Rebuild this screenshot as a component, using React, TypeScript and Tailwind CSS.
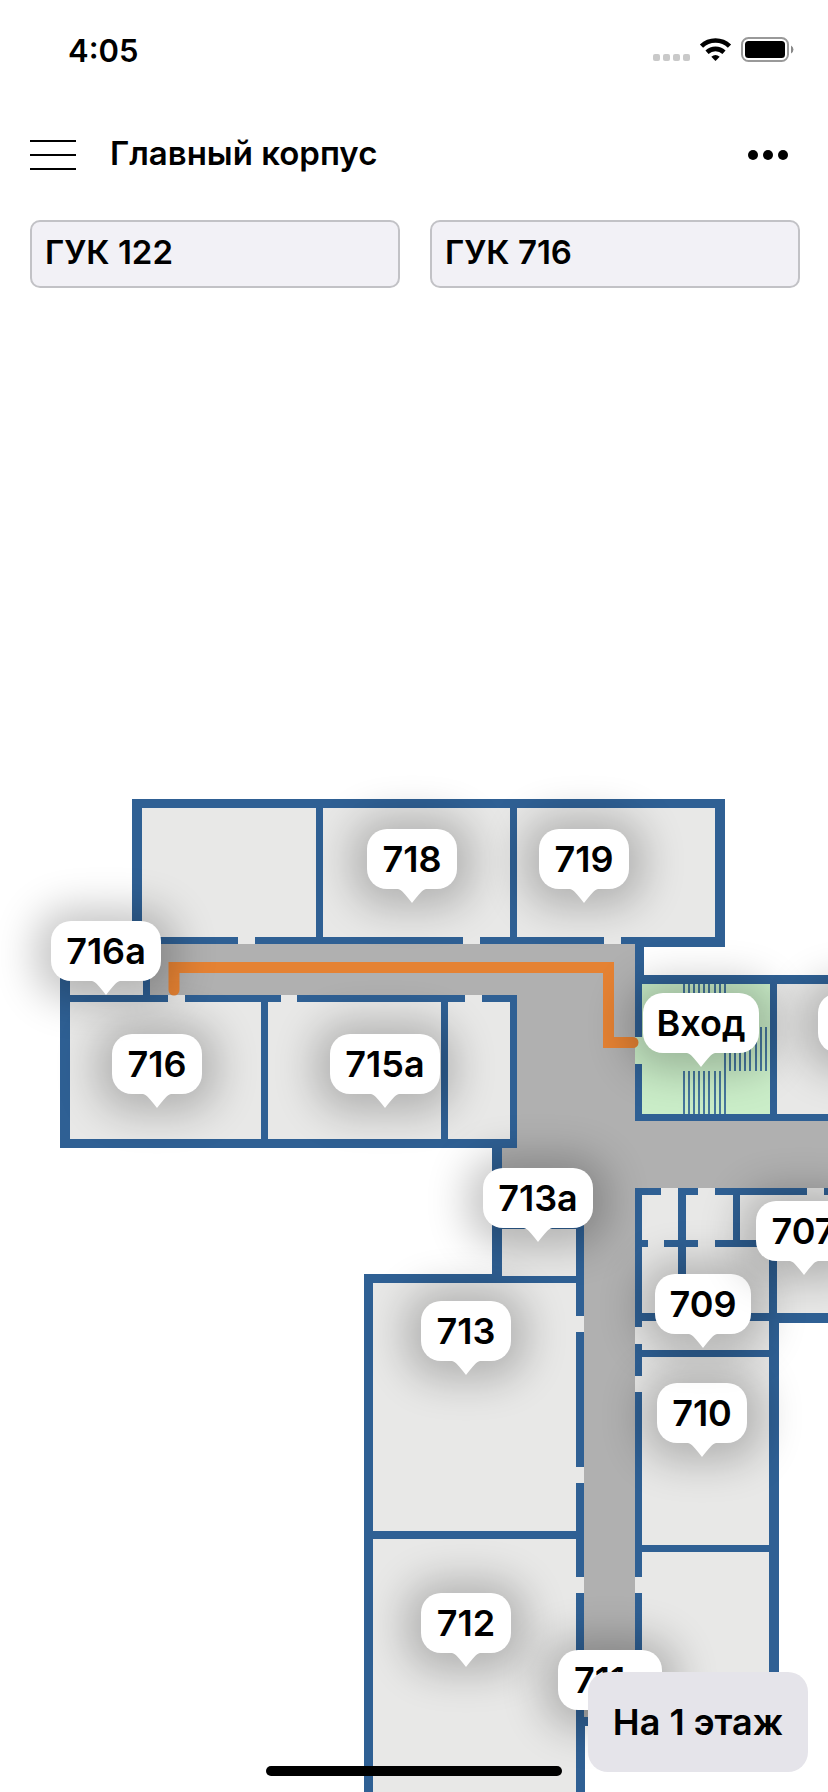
import React from "react";

type Rect = [x1: number, y1: number, x2: number, y2: number];

const ROOMS: Rect[] = [
  [136, 803, 720, 945],
  [65, 940, 146, 1000],
  [65, 995, 514, 1144],
  [774, 980, 840, 1118],
  [498, 1226, 584, 1280],
  [368, 1278, 584, 1800],
  [635, 1188, 840, 1318],
  [635, 1318, 774, 1722],
];

const CORRIDORS: Rect[] = [
  [150, 944, 635, 995],
  [517, 944, 635, 1188],
  [502, 1146, 635, 1226],
  [584, 1188, 635, 1717],
  [635, 1121, 840, 1188],
];

const WALLS: Rect[] = [
  // northern block
  [132, 799, 725, 808],
  [132, 799, 142, 944],
  [715, 799, 725, 947],
  [132, 937, 238, 944],
  [255, 937, 463, 944],
  [480, 937, 604, 944],
  [621, 937, 725, 944],
  [635, 937, 725, 947],
  [316, 799, 323, 944],
  [510, 799, 517, 944],
  // western block
  [60, 937, 70, 1148],
  [60, 1139, 517, 1148],
  [70, 995, 168, 1002],
  [185, 995, 281, 1002],
  [297, 995, 465, 1002],
  [482, 995, 517, 1002],
  [143, 937, 150, 1002],
  [261, 995, 268, 1140],
  [441, 995, 448, 1140],
  [510, 995, 517, 1146],
  // stairwell
  [635, 940, 644, 984],
  [635, 975, 840, 984],
  [635, 975, 642, 1037],
  [635, 1064, 642, 1121],
  [635, 1114, 840, 1121],
  [770, 975, 777, 1121],
  // southern block
  [492, 1146, 502, 1283],
  [492, 1222, 584, 1229],
  [492, 1276, 584, 1283],
  [364, 1274, 502, 1283],
  [364, 1274, 373, 1800],
  [576, 1222, 584, 1316],
  [576, 1332, 584, 1467],
  [576, 1483, 584, 1577],
  [576, 1593, 584, 1726],
  [576, 1717, 585, 1800],
  [576, 1717, 779, 1726],
  [364, 1531, 584, 1539],
  // eastern block
  [635, 1188, 661, 1195],
  [678, 1188, 698, 1195],
  [715, 1188, 807, 1195],
  [824, 1188, 840, 1195],
  [678, 1188, 686, 1321],
  [733, 1188, 740, 1247],
  [635, 1240, 648, 1247],
  [664, 1240, 698, 1247],
  [715, 1240, 840, 1247],
  [769, 1240, 777, 1321],
  [769, 1313, 840, 1323],
  [635, 1313, 779, 1321],
  [635, 1350, 779, 1357],
  [635, 1188, 642, 1327],
  [635, 1344, 642, 1376],
  [635, 1392, 642, 1577],
  [635, 1593, 642, 1726],
  [635, 1545, 779, 1552],
  [769, 1313, 779, 1726],
];

const STAIRS_LEFT = [684, 689, 694, 699, 704, 709, 715, 720, 725];
const STAIRS_RIGHT = [725, 730, 735, 740, 745, 750, 756, 761, 766];

const MAP_TOP = 300;

const MARKERS = [
  { label: "718", x: 367, y: 829, width: 90 },
  { label: "719", x: 539, y: 829, width: 90 },
  { label: "716", x: 112, y: 1034, width: 90 },
  { label: "716a", x: 51, y: 921, width: 110 },
  { label: "715a", x: 330, y: 1034, width: 110 },
  { label: "", x: 818, y: 993, width: 90 },
  { label: "Вход", x: 643, y: 993, width: 116 },
  { label: "713a", x: 483, y: 1168, width: 110 },
  { label: "713", x: 421, y: 1301, width: 90 },
  { label: "710", x: 657, y: 1383, width: 90 },
  { label: "709", x: 655, y: 1274, width: 96 },
  { label: "707", x: 756, y: 1201, width: 95 },
  { label: "712", x: 421, y: 1593, width: 90 },
  { label: "711a", x: 558, y: 1650, width: 104 },
];

function Rects({ items, fill }: { items: Rect[]; fill: string }) {
  return (
    <g fill={fill}>
      {items.map(([x1, y1, x2, y2], i) => (
        <rect key={i} x={x1} y={y1} width={x2 - x1} height={y2 - y1} />
      ))}
    </g>
  );
}

function FloorPlan() {
  return (
    <svg
      className="absolute left-0 top-0 h-[1492px] w-[828px]"
      viewBox="0 300 828 1492"
      aria-hidden="true"
    >
      <Rects items={ROOMS} fill="#e8e8e7" />
      <Rects items={CORRIDORS} fill="#b0b0b0" />
      <rect x="635" y="980" width="139" height="138" fill="#caedc8" />
      <g stroke="#2f6094" strokeWidth="2" strokeOpacity="0.85">
        {STAIRS_LEFT.map((x) => (
          <path key={x} d={`M${x} 984V1027M${x} 1071V1114`} />
        ))}
        {STAIRS_RIGHT.map((x) => (
          <path key={x} d={`M${x} 1027V1071`} />
        ))}
      </g>
      <Rects items={WALLS} fill="#2f6094" />
      <path
        d="M174 990V967.5H608.5V1042.5H633"
        fill="none"
        stroke="#e58233"
        strokeWidth="11"
        strokeLinecap="round"
      />
    </svg>
  );
}

function Marker({ label, x, y, width }: (typeof MARKERS)[number]) {
  return (
    <button
      type="button"
      className="absolute flex h-[60px] items-center justify-center rounded-[20px] bg-white text-[36px] leading-none font-semibold shadow-[0_3px_40px_16px_rgba(0,0,0,0.23)]"
      style={{ left: x, top: y - MAP_TOP, width }}
    >
      {label}
      <svg
        className="absolute top-full left-1/2 h-[14px] w-7 -translate-x-1/2"
        viewBox="0 0 28 14"
        aria-hidden="true"
      >
        <path d="M0 0C4 1 6 4 14 14C22 4 24 1 28 0Z" fill="#fff" />
      </svg>
    </button>
  );
}

function StatusBar() {
  return (
    <div className="flex h-[100px] items-center justify-between pr-[34px] pl-[68px]">
      <span className="text-[31px] leading-none font-semibold">4:05</span>
      <svg className="h-[26px] w-[142px]" viewBox="652 37 142 26" aria-hidden="true">
        <g fill="#c9c9c9">
          <rect x="653" y="54" width="7" height="7" rx="2" />
          <rect x="663" y="54" width="7" height="7" rx="2" />
          <rect x="673" y="54" width="7" height="7" rx="2" />
          <rect x="683" y="54" width="7" height="7" rx="2" />
        </g>
        <g fill="none" stroke="#000" strokeWidth="4.6">
          <path d="M701.500 46.200A20 20 0 0 1 729.500 46.200" />
          <path d="M707.000 52.200A12.500 12.500 0 0 1 724.000 52.200" />
        </g>
        <path d="M711.300 56.800A6.500 6.500 0 0 1 719.700 56.800L715.500 61Z" fill="#000" />
        <rect x="742" y="38" width="46" height="23" rx="6.500" fill="none" stroke="#999" strokeWidth="2" />
        <rect x="745" y="41" width="40" height="17" rx="3.500" fill="#000" />
        <path d="M791 45.500A4.500 4.500 0 0 1 791 53.500Z" fill="#888" />
      </svg>
    </div>
  );
}

export default function App() {
  const field =
    "h-[68px] min-w-0 flex-1 rounded-[10px] border-2 border-[#c2c2c6] bg-[#f2f1f6] px-[13px] pb-1 text-[33px] font-semibold text-black outline-none";

  return (
    <div className="flex min-h-screen flex-col overflow-hidden bg-white font-['Inter','Noto_Sans',sans-serif] text-black">
      <header>
        <StatusBar />
        <div className="flex h-[110px] items-center px-[30px]">
          <button type="button" aria-label="Меню" className="flex w-[46px] flex-col gap-3">
            <span className="h-[2px] w-full bg-black" />
            <span className="h-[2px] w-full bg-black" />
            <span className="h-[2px] w-full bg-black" />
          </button>
          <h1 className="ml-[34px] flex-1 pb-1 text-[33px] leading-10 font-semibold">Главный корпус</h1>
          <button type="button" aria-label="Ещё" className="mr-[10px] flex gap-[5px]">
            <span className="size-[10px] rounded-full bg-black" />
            <span className="size-[10px] rounded-full bg-black" />
            <span className="size-[10px] rounded-full bg-black" />
          </button>
        </div>
        <div className="flex gap-[30px] pt-[10px] pr-7 pb-3 pl-[30px]">
          <input className={field} aria-label="Откуда" defaultValue="ГУК 122" />
          <input className={field} aria-label="Куда" defaultValue="ГУК 716" />
        </div>
      </header>

      <main className="relative min-h-[1492px] flex-1 overflow-hidden">
        <FloorPlan />
        {MARKERS.map((marker) => (
          <Marker key={`${marker.x}-${marker.y}`} {...marker} />
        ))}
        <div className="absolute bottom-4 left-1/2 h-[10px] w-[296px] -translate-x-1/2 rounded-full bg-black" />
        <button
          type="button"
          className="absolute right-5 bottom-5 h-[100px] w-[220px] rounded-[20px] bg-[#e5e4ea] text-[36px] font-semibold"
        >
          На 1 этаж
        </button>
      </main>
    </div>
  );
}
